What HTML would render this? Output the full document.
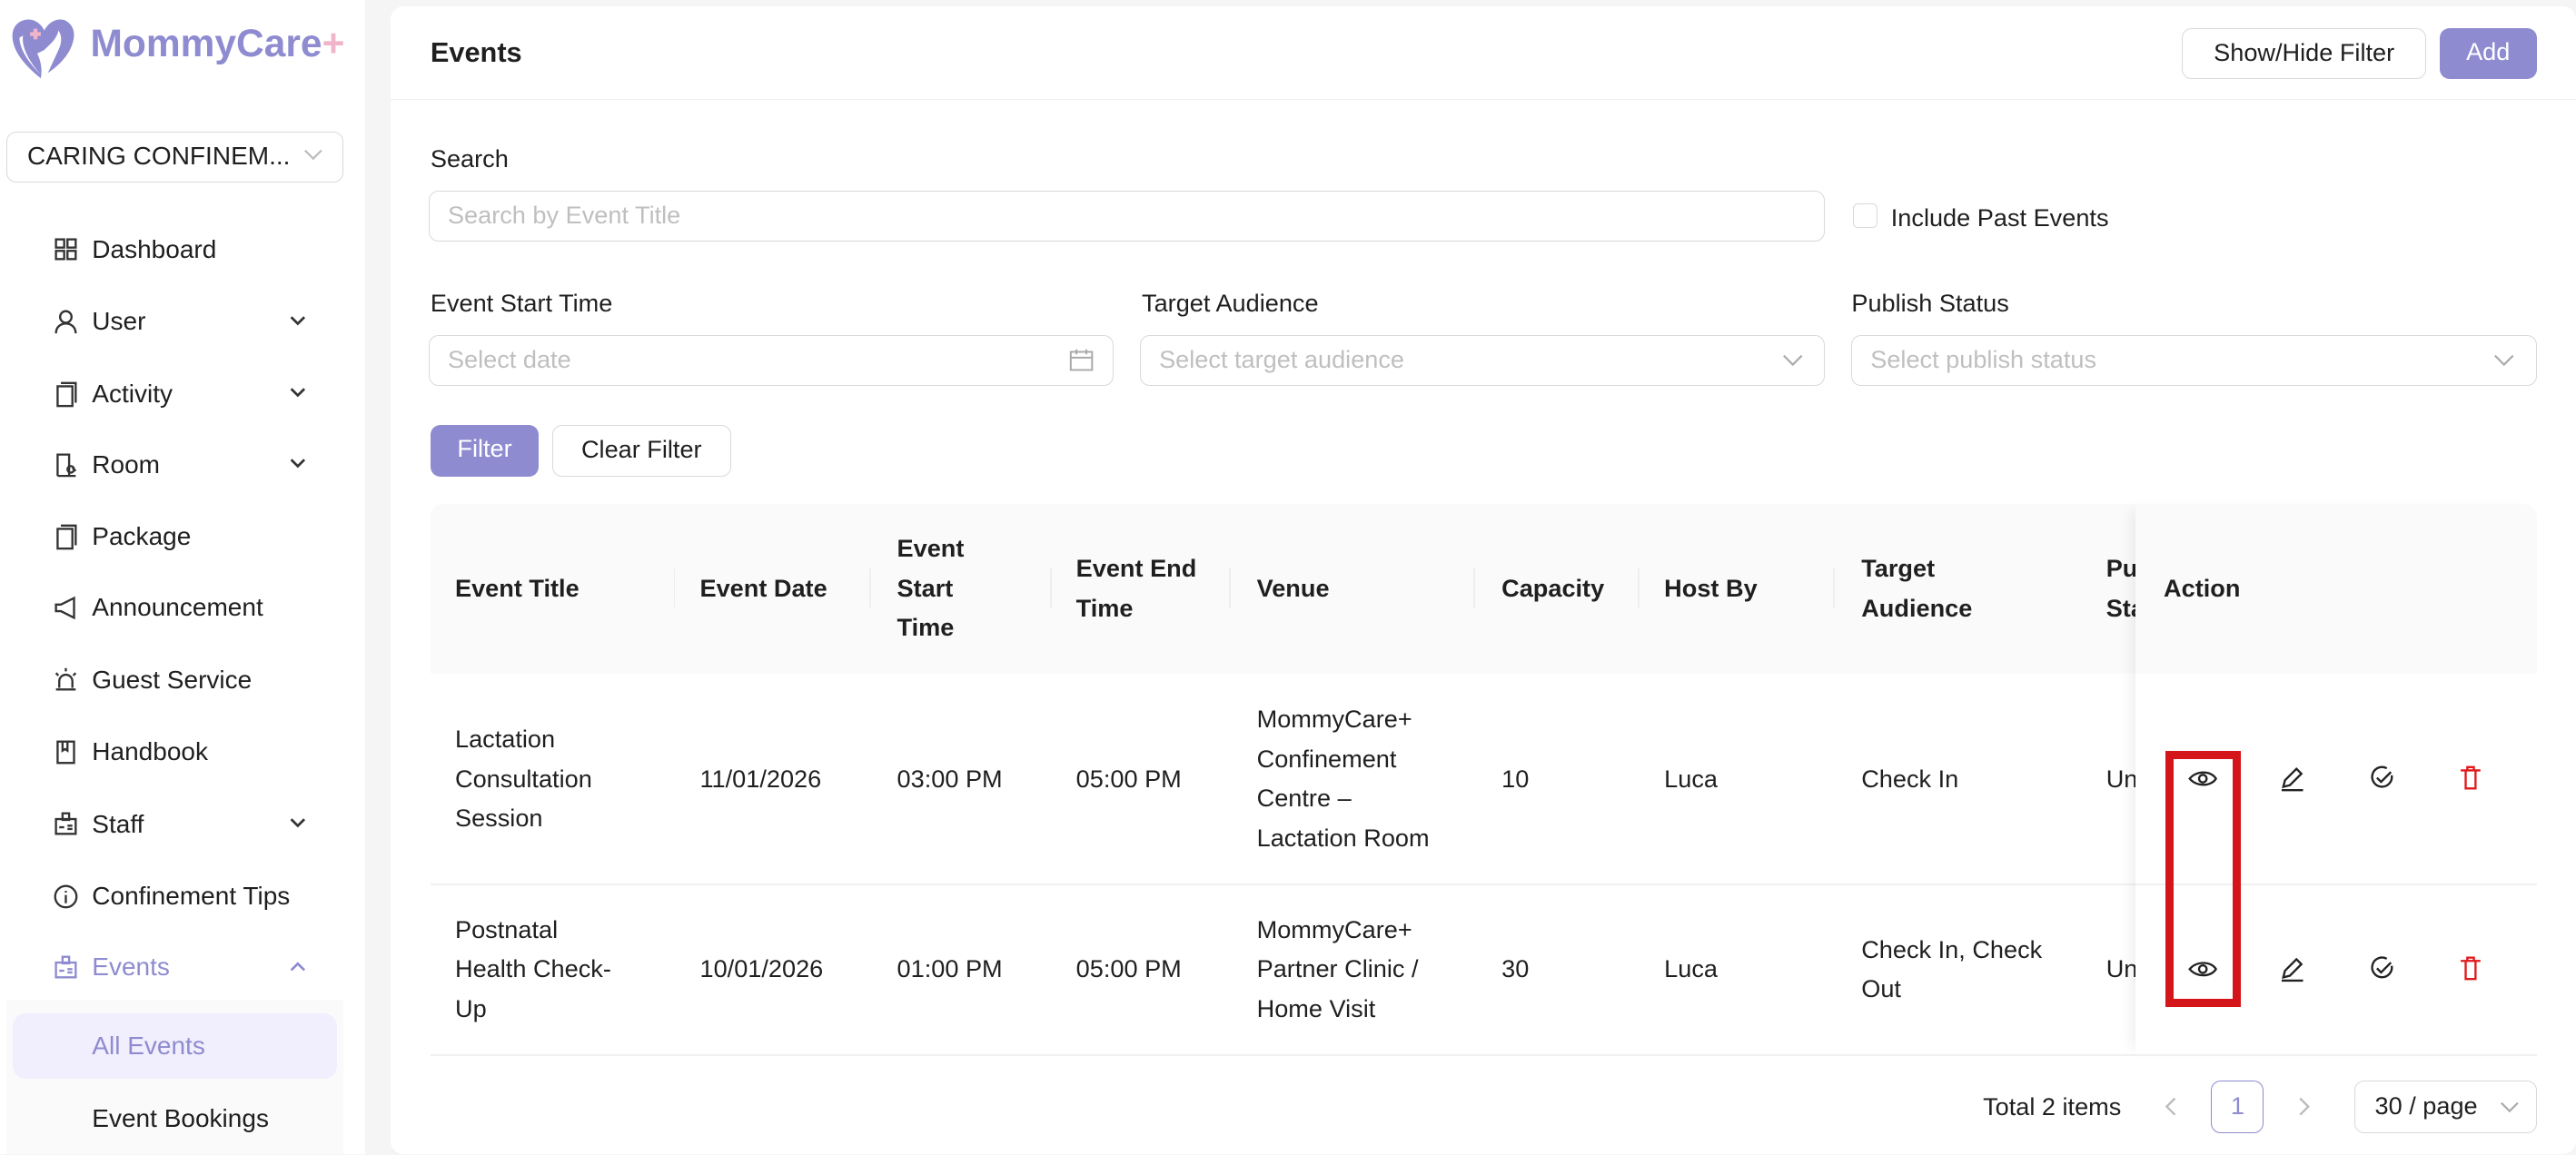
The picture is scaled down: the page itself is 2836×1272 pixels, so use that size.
<!DOCTYPE html>
<html><head><meta charset="utf-8"><style>
*{box-sizing:border-box;margin:0;padding:0}
html,body{width:2836px;height:1272px;overflow:hidden;background:#f5f5f5}
#r{zoom:1.80867;width:1568px;height:703px;position:relative;font-family:"Liberation Sans",sans-serif;font-size:15px;color:#1f1f1f}
.a{position:absolute}
.side{left:0;top:0;width:222px;height:703px;background:#fff}
.card{left:238px;top:4px;width:1330px;height:699px;background:#fff;border-radius:8px}
.mi{position:absolute;left:56px;font-size:15.5px;line-height:20px}
.ic{position:absolute;left:32px;width:16px;height:16px}
.chev{position:absolute;left:175px;width:12px;height:12px}
.inp{position:absolute;border:1px solid #d9d9d9;border-radius:6px;height:31px;color:#bfbfbf;padding:0 11px;line-height:29px;font-size:15px;background:#fff}
.lbl{position:absolute;font-size:15px}
.btn{position:absolute;height:31px;border-radius:6px;line-height:29px;text-align:center;font-size:15px}
.th{position:absolute;font-weight:bold;font-size:15px;line-height:24px}
.td{position:absolute;font-size:15px;line-height:24px}
</style></head><body><div id="r">
<div class="a side">
 <svg class="a" style="left:5px;top:9px" width="44" height="41" viewBox="0 0 40 38"><path d="M18 36 C8 28 2 20 2 12 C2 5 8 2 13 3 C17 4 19 7 20 9 C22 5 26 2 31 3 C36 5 38 10 36 16 C34 23 28 29 22 33 L28 20 C30 16 30 12 28 9 C27 14 23 17 20 20 L16 22 C18 26 19 31 18 36 Z" fill="#8e8bd0"/><path d="M8 12 C7 18 11 26 18 34 C12 28 6 20 6 13 Z" fill="#fff"/><path d="M12 11h6M15 8v6" stroke="#f1b5c9" stroke-width="2.2"/></svg>
 <div class="a" style="left:55px;top:14px;font-size:23.5px;font-weight:bold;color:#8e8bd0">MommyCare<span style="color:#f1b5c9">+</span></div>
 <div class="a" style="left:4px;top:80px;width:205px;height:31px;border:1px solid #d9d9d9;border-radius:6px;font-size:15.5px;line-height:29px;padding-left:12px">CARING CONFINEM...<svg class="a" style="left:180px;top:9px" width="12" height="10"><path d="M1 2l5 5 5-5" stroke="#bbb" fill="none" stroke-width="1.2"/></svg></div>
 <svg class="ic" style="top:144px" viewBox="0 0 16 16" fill="none" stroke="#333" stroke-width="1.3"><rect x="2" y="2" width="5" height="5"/><rect x="9" y="2" width="5" height="5"/><rect x="2" y="9" width="5" height="5"/><rect x="9" y="9" width="5" height="5"/></svg><div class="mi" style="top:142px">Dashboard</div>
 <svg class="ic" style="top:188px" viewBox="0 0 16 16" fill="none" stroke="#333" stroke-width="1.3"><circle cx="8" cy="5" r="3.5"/><path d="M2 15c0-4 3-6 6-6s6 2 6 6"/></svg><div class="mi" style="top:186px">User</div>
 <svg class="chev" style="top:189px"><path d="M2 4l4 4 4-4" stroke="#333" fill="none" stroke-width="1.5"/></svg>
 <svg class="ic" style="top:232px" viewBox="0 0 16 16" fill="none" stroke="#333" stroke-width="1.3"><rect x="3" y="3" width="9" height="12"/><path d="M5 1h9v12"/></svg><div class="mi" style="top:230px">Activity</div>
 <svg class="chev" style="top:233px"><path d="M2 4l4 4 4-4" stroke="#333" fill="none" stroke-width="1.5"/></svg>
 <svg class="ic" style="top:275px" viewBox="0 0 16 16" fill="none" stroke="#333" stroke-width="1.3"><path d="M3 15V2h7v13M3 15h11M12 10l2 2"/><circle cx="11" cy="11" r="2"/></svg><div class="mi" style="top:273px">Room</div>
 <svg class="chev" style="top:276px"><path d="M2 4l4 4 4-4" stroke="#333" fill="none" stroke-width="1.5"/></svg>
 <svg class="ic" style="top:319px" viewBox="0 0 16 16" fill="none" stroke="#333" stroke-width="1.3"><rect x="3" y="3" width="9" height="12"/><path d="M5 1h9v12"/></svg><div class="mi" style="top:317px">Package</div>
 <svg class="ic" style="top:362px" viewBox="0 0 16 16" fill="none" stroke="#333" stroke-width="1.3"><path d="M2 6v4h3l8 4V2L5 6z"/></svg><div class="mi" style="top:360px">Announcement</div>
 <svg class="ic" style="top:406px" viewBox="0 0 16 16" fill="none" stroke="#333" stroke-width="1.3"><path d="M4 13V9a4 4 0 018 0v4M2 14h12M8 1v2M2 4l1.5 1.5M14 4l-1.5 1.5"/></svg><div class="mi" style="top:404px">Guest Service</div>
 <svg class="ic" style="top:450px" viewBox="0 0 16 16" fill="none" stroke="#333" stroke-width="1.3"><rect x="3" y="1.5" width="10" height="13"/><path d="M6 2v5l1.5-1 1.5 1V2"/></svg><div class="mi" style="top:448px">Handbook</div>
 <svg class="ic" style="top:494px" viewBox="0 0 16 16" fill="none" stroke="#333" stroke-width="1.3"><rect x="2" y="5" width="12" height="9"/><rect x="6" y="1.5" width="4" height="4"/><path d="M4 10h3M9 9h3M9 11h3"/></svg><div class="mi" style="top:492px">Staff</div>
 <svg class="chev" style="top:495px"><path d="M2 4l4 4 4-4" stroke="#333" fill="none" stroke-width="1.5"/></svg>
 <svg class="ic" style="top:538px" viewBox="0 0 16 16" fill="none" stroke="#333" stroke-width="1.3"><circle cx="8" cy="8" r="6.5"/><path d="M8 7v5M8 4.5v1"/></svg><div class="mi" style="top:536px">Confinement Tips</div>
 <svg class="ic" style="top:581px" viewBox="0 0 16 16" fill="none" stroke="#8e8bd0" stroke-width="1.3"><rect x="2" y="5" width="12" height="9"/><rect x="6" y="1.5" width="4" height="4"/><path d="M4 10h3M9 9h3M9 11h3"/></svg><div class="mi" style="top:579px;color:#8e8bd0">Events</div>
 <svg class="chev" style="top:583px"><path d="M2 8l4-4 4 4" stroke="#8e8bd0" fill="none" stroke-width="1.5"/></svg>
 <div class="a" style="left:4px;top:609px;width:205px;height:94px;background:#fafafa"></div>
 <div class="a" style="left:8px;top:617px;width:197px;height:40px;background:#f1eefd;border-radius:8px"></div>
 <div class="mi" style="top:627px;color:#8e8bd0">All Events</div>
 <div class="mi" style="top:671px">Event Bookings</div>
</div>
<div class="a card"></div>
<div class="a" style="left:238px;top:60px;width:1330px;height:1px;background:#f0f0f0"></div>
<div class="a" style="left:262px;top:22px;font-size:17px;font-weight:bold">Events</div>
<div class="btn" style="left:1328px;top:17px;width:149px;border:1px solid #d9d9d9">Show/Hide Filter</div>
<div class="btn" style="left:1485px;top:17px;width:59px;background:#8e8bd0;color:#fff">Add</div>
<div class="lbl" style="left:262px;top:88px">Search</div>
<div class="inp" style="left:261px;top:116px;width:850px">Search by Event Title</div>
<div class="a" style="left:1128px;top:124px;width:15px;height:15px;border:1px solid #d9d9d9;border-radius:3px"></div>
<div class="lbl" style="left:1151px;top:124px">Include Past Events</div>
<div class="lbl" style="left:262px;top:176px">Event Start Time</div>
<div class="lbl" style="left:695px;top:176px">Target Audience</div>
<div class="lbl" style="left:1127px;top:176px">Publish Status</div>
<div class="inp" style="left:261px;top:204px;width:417px">Select date<svg class="a" style="left:389px;top:7px" width="15" height="15" viewBox="0 0 15 15" fill="none" stroke="#aaa" stroke-width="1.1"><rect x="1" y="2.5" width="13" height="11"/><path d="M1 6h13M4.5 1v3M10.5 1v3"/></svg></div>
<div class="inp" style="left:694px;top:204px;width:417px">Select target audience<svg class="a" style="left:390px;top:10px" width="13" height="10"><path d="M1 2l5.5 5.5L12 2" stroke="#aaa" fill="none" stroke-width="1.2"/></svg></div>
<div class="inp" style="left:1127px;top:204px;width:417px">Select publish status<svg class="a" style="left:390px;top:10px" width="13" height="10"><path d="M1 2l5.5 5.5L12 2" stroke="#aaa" fill="none" stroke-width="1.2"/></svg></div>
<div class="btn" style="left:262px;top:259px;width:66px;background:#8e8bd0;color:#fff">Filter</div>
<div class="btn" style="left:336px;top:259px;width:109px;border:1px solid #d9d9d9">Clear Filter</div>
<div class="a" style="left:262px;top:307px;width:1282px;height:103px;background:#fafafa;border-radius:8px 8px 0 0"></div>
<div class="a" style="left:262px;top:538px;width:1282px;height:1px;background:#f0f0f0"></div>
<div class="a" style="left:262px;top:642px;width:1282px;height:1px;background:#f0f0f0"></div>
<div class="a" style="left:410px;top:346px;width:1px;height:24px;background:#eee"></div>
<div class="a" style="left:529px;top:346px;width:1px;height:24px;background:#eee"></div>
<div class="a" style="left:639px;top:346px;width:1px;height:24px;background:#eee"></div>
<div class="a" style="left:748px;top:346px;width:1px;height:24px;background:#eee"></div>
<div class="a" style="left:897px;top:346px;width:1px;height:24px;background:#eee"></div>
<div class="a" style="left:997px;top:346px;width:1px;height:24px;background:#eee"></div>
<div class="a" style="left:1116px;top:346px;width:1px;height:24px;background:#eee"></div>
<div class="th" style="left:277px;top:346px">Event Title</div>
<div class="th" style="left:426px;top:346px">Event Date</div>
<div class="th" style="left:546px;top:322px">Event<br>Start<br>Time</div>
<div class="th" style="left:655px;top:334px">Event End<br>Time</div>
<div class="th" style="left:765px;top:346px">Venue</div>
<div class="th" style="left:914px;top:346px">Capacity</div>
<div class="th" style="left:1013px;top:346px">Host By</div>
<div class="th" style="left:1133px;top:334px">Target<br>Audience</div>
<div class="th" style="left:1282px;top:334px">Pu<br>Sta</div>
<div class="td" style="left:277px;top:438px">Lactation<br>Consultation<br>Session</div>
<div class="td" style="left:426px;top:462px">11/01/2026</div>
<div class="td" style="left:546px;top:462px">03:00 PM</div>
<div class="td" style="left:655px;top:462px">05:00 PM</div>
<div class="td" style="left:765px;top:426px">MommyCare+<br>Confinement<br>Centre –<br>Lactation Room</div>
<div class="td" style="left:914px;top:462px">10</div>
<div class="td" style="left:1013px;top:462px">Luca</div>
<div class="td" style="left:1133px;top:462px">Check In</div>
<div class="td" style="left:1282px;top:462px">Un</div>
<div class="td" style="left:277px;top:554px">Postnatal<br>Health Check-<br>Up</div>
<div class="td" style="left:426px;top:578px">10/01/2026</div>
<div class="td" style="left:546px;top:578px">01:00 PM</div>
<div class="td" style="left:655px;top:578px">05:00 PM</div>
<div class="td" style="left:765px;top:554px">MommyCare+<br>Partner Clinic /<br>Home Visit</div>
<div class="td" style="left:914px;top:578px">30</div>
<div class="td" style="left:1013px;top:578px">Luca</div>
<div class="td" style="left:1133px;top:566px">Check In, Check<br>Out</div>
<div class="td" style="left:1282px;top:578px">Un</div>
<div class="a" style="left:1300px;top:307px;width:244px;height:335px;background:#fff;box-shadow:-6px 0 8px -4px rgba(0,0,0,0.08)"></div>
<div class="a" style="left:1300px;top:307px;width:244px;height:103px;background:#fafafa;border-radius:0 8px 0 0"></div>
<div class="a" style="left:1300px;top:538px;width:244px;height:1px;background:#f0f0f0"></div>
<div class="a" style="left:1300px;top:642px;width:244px;height:1px;background:#f0f0f0"></div>
<div class="th" style="left:1317px;top:346px">Action</div>
<svg class="a" style="left:1300px;top:440px" width="244" height="180" viewBox="0 0 244 180" fill="none" stroke-width="1.3">
 <g stroke="#222">
  <path d="M33 34c4-5 13-5 16 0c-3 5-12 5-16 0z"/><circle cx="41" cy="34" r="2.3"/>
  <path d="M89 41h13M90 39l1-4 7-7 3 3-7 7z"/>
  <path d="M156 32a6 6 0 1 1-3-4.3M147 33.5l2.5 2.5 6-6"/>
 </g>
 <g stroke="#e0191b"><path d="M198 29h12M201 29v11h6V29M202 29v-2h4v2"/></g>
 <g transform="translate(0,116)">
  <g stroke="#222">
  <path d="M33 34c4-5 13-5 16 0c-3 5-12 5-16 0z"/><circle cx="41" cy="34" r="2.3"/>
  <path d="M89 41h13M90 39l1-4 7-7 3 3-7 7z"/>
  <path d="M156 32a6 6 0 1 1-3-4.3M147 33.5l2.5 2.5 6-6"/>
  </g>
  <g stroke="#e0191b"><path d="M198 29h12M201 29v11h6V29M202 29v-2h4v2"/></g>
 </g>
</svg>
<div class="a" style="left:1318px;top:457px;width:46px;height:156px;border:5px solid #d41519"></div>
<div class="td" style="left:1207px;top:662px">Total 2 items</div>
<svg class="a" style="left:1316px;top:667px" width="12" height="14"><path d="M8 2L3 7l5 5" stroke="#bbb" fill="none" stroke-width="1.3"/></svg>
<div class="btn" style="left:1346px;top:658px;width:32px;height:32px;border:1px solid #8e8bd0;color:#8e8bd0;line-height:30px">1</div>
<svg class="a" style="left:1396px;top:667px" width="12" height="14"><path d="M4 2l5 5-5 5" stroke="#bbb" fill="none" stroke-width="1.3"/></svg>
<div class="btn" style="left:1433px;top:658px;width:111px;height:32px;border:1px solid #d9d9d9;text-align:left;padding-left:12px;line-height:30px">30 / page<svg class="a" style="left:88px;top:11px" width="12" height="10"><path d="M1 2l5 5 5-5" stroke="#aaa" fill="none" stroke-width="1.2"/></svg></div>
</div></body></html>
